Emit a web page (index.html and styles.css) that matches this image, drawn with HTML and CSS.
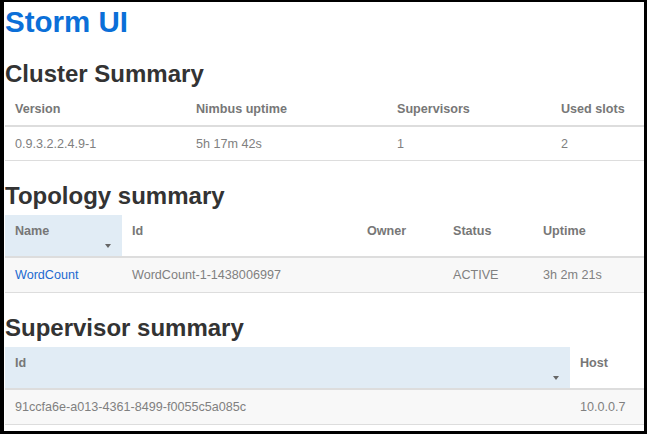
FILE: index.html
```html
<!DOCTYPE html>
<html>
<head>
<meta charset="utf-8">
<title>Storm UI</title>
<link rel="stylesheet" href="styles.css">
</head>
<body>
<div class="frame">
  <div class="page">
    <h1 class="title"><a href="#">Storm UI</a></h1>

    <h2 class="section">Cluster Summary</h2>
    <table class="grid cluster">
      <colgroup><col class="c1"><col class="c2"><col class="c3"><col></colgroup>
      <thead>
        <tr><th>Version</th><th>Nimbus uptime</th><th>Supervisors</th><th>Used slots</th></tr>
      </thead>
      <tbody>
        <tr><td>0.9.3.2.2.4.9-1</td><td>5h 17m 42s</td><td>1</td><td>2</td></tr>
      </tbody>
    </table>

    <h2 class="section">Topology summary</h2>
    <table class="grid topology">
      <colgroup><col class="t1"><col class="t2"><col class="t3"><col class="t4"><col></colgroup>
      <thead>
        <tr>
          <th class="sorted"><span class="label">Name</span><span class="caret"></span></th>
          <th>Id</th><th>Owner</th><th>Status</th><th>Uptime</th>
        </tr>
      </thead>
      <tbody>
        <tr class="odd"><td><a href="#">WordCount</a></td><td>WordCount-1-1438006997</td><td></td><td>ACTIVE</td><td>3h 2m 21s</td></tr>
      </tbody>
    </table>

    <h2 class="section">Supervisor summary</h2>
    <table class="grid supervisor">
      <colgroup><col class="s1"><col></colgroup>
      <thead>
        <tr>
          <th class="sorted"><span class="label">Id</span><span class="caret"></span></th>
          <th>Host</th>
        </tr>
      </thead>
      <tbody>
        <tr class="odd"><td>91ccfa6e-a013-4361-8499-f0055c5a085c</td><td>10.0.0.7</td></tr>
      </tbody>
    </table>
  </div>
</div>
</body>
</html>
```

FILE: styles.css
```css
html, body {
  margin: 0;
  padding: 0;
  background: #000;
}

.frame {
  box-sizing: border-box;
  width: 647px;
  height: 434px;
  border-style: solid;
  border-color: #000;
  border-width: 2px 3px 3px 4px;
  background: #fff;
  overflow: hidden;
}

.page {
  padding: 0 0 0 1px;
  font-family: "Liberation Sans", Arial, sans-serif;
  color: #777;
}

.title {
  margin: 3px 0 22px;
  font-size: 29.5px;
  line-height: 34px;
  font-weight: bold;
}

.title a {
  color: #0b6fd8;
  text-decoration: none;
}

.section {
  margin: 22px 0 6px;
  font-size: 24px;
  line-height: 26px;
  font-weight: bold;
  color: #333;
}

.grid {
  width: 639px;
  border-collapse: collapse;
  table-layout: fixed;
  font-size: 12.6px;
  line-height: 18px;
}

.grid th {
  text-align: left;
  vertical-align: top;
  font-weight: bold;
  color: #777;
  padding: 7px 10px;
  border-bottom: 2px solid #ddd;
}

.grid td {
  color: #808080;
  padding: 8px 10px;
  border-bottom: 1px solid #ddd;
  white-space: nowrap;
}

.cluster td {
  padding: 7.5px 10px;
}

.grid td a {
  color: #1c6ad0;
  text-decoration: none;
}

.grid tr.odd td {
  background: #f8f8f8;
}

.grid th.sorted {
  background: #e1ecf5;
  padding: 7px 11px 8px 10px;
}

.label {
  display: block;
}

.caret {
  display: block;
  width: 0;
  height: 0;
  margin: 4px 0 0 auto;
  border-left: 3.5px solid transparent;
  border-right: 3.5px solid transparent;
  border-top: 4px solid #666;
}

.c1 { width: 181px; }
.c2 { width: 201px; }
.c3 { width: 164px; }

.t1 { width: 117px; }
.t2 { width: 235px; }
.t3 { width: 86px; }
.t4 { width: 90px; }

.s1 { width: 565px; }
```
